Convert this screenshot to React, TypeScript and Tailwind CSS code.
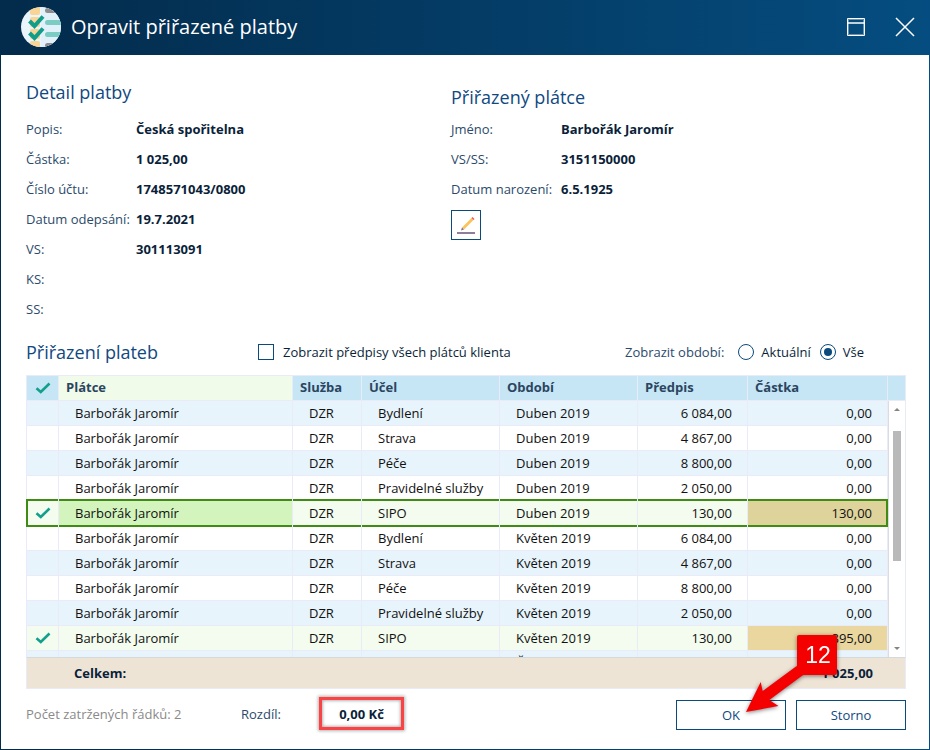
import React, { useState } from 'react';

const paymentDetail = [
  { label: 'Popis:', value: 'Česká spořitelna' },
  { label: 'Částka:', value: '1 025,00' },
  { label: 'Číslo účtu:', value: '1748571043/0800' },
  { label: 'Datum odepsání:', value: '19.7.2021' },
  { label: 'VS:', value: '301113091' },
  { label: 'KS:', value: '' },
  { label: 'SS:', value: '' },
];

const payerDetail = [
  { label: 'Jméno:', value: 'Barbořák Jaromír' },
  { label: 'VS/SS:', value: '3151150000' },
  { label: 'Datum narození:', value: '6.5.1925' },
];

const rows = [
  { purpose: 'Bydlení', period: 'Duben 2019', charge: '6 084,00', amount: '0,00' },
  { purpose: 'Strava', period: 'Duben 2019', charge: '4 867,00', amount: '0,00' },
  { purpose: 'Péče', period: 'Duben 2019', charge: '8 800,00', amount: '0,00' },
  { purpose: 'Pravidelné služby', period: 'Duben 2019', charge: '2 050,00', amount: '0,00' },
  { purpose: 'SIPO', period: 'Duben 2019', charge: '130,00', amount: '130,00', checked: true, selected: true },
  { purpose: 'Bydlení', period: 'Květen 2019', charge: '6 084,00', amount: '0,00' },
  { purpose: 'Strava', period: 'Květen 2019', charge: '4 867,00', amount: '0,00' },
  { purpose: 'Péče', period: 'Květen 2019', charge: '8 800,00', amount: '0,00' },
  { purpose: 'Pravidelné služby', period: 'Květen 2019', charge: '2 050,00', amount: '0,00' },
  { purpose: 'SIPO', period: 'Květen 2019', charge: '130,00', amount: '895,00', checked: true },
  { purpose: 'Bydlení', period: 'Červen 2019', charge: '6 084,00', amount: '0,00' },
];

const headers = ['Služba', 'Účel', 'Období', 'Předpis', 'Částka'];

function CheckMark() {
  return (
    <svg width="16" height="12" viewBox="0 0 16 12" fill="none" className="mx-auto">
      <path d="M1.5 6.2 L5.8 10 L14.5 1.5" stroke="#12a08c" strokeWidth="2.6" />
    </svg>
  );
}

function Logo() {
  return (
    <svg width="40" height="40" viewBox="0 0 40 40">
      <defs>
        <clipPath id="logo-circle">
          <circle cx="20" cy="20" r="20" />
        </clipPath>
      </defs>
      <g clipPath="url(#logo-circle)">
        <rect width="40" height="40" fill="#e9f4fc" />
        <rect x="20" width="20" height="40" fill="#e2f0f9" />
        <g fill="#f8d595">
          <rect x="9" y="-4" width="10" height="12" rx="2" />
          <rect x="9" y="10" width="10" height="10" rx="2" />
          <rect x="9" y="22" width="10" height="10" rx="2" />
          <rect x="9" y="34" width="10" height="10" rx="2" />
        </g>
        <g fill="#7bcdc4">
          <rect x="24" y="13" width="20" height="5" rx="2.5" />
          <rect x="24" y="25" width="20" height="5" rx="2.5" />
        </g>
        <g fill="#8c8c8f">
          <rect x="24" y="1" width="20" height="5" rx="2.5" />
          <rect x="24" y="36" width="20" height="5" rx="2.5" />
        </g>
        <g fill="none" stroke="#109e8b" strokeWidth="4">
          <path d="M8.5 14 L13.5 19 L22 9.5" />
          <path d="M8.5 26 L13.5 31 L22 21.5" />
        </g>
      </g>
    </svg>
  );
}

function DetailList({ items }: { items: { label: string; value: string }[] }) {
  return (
    <dl>
      {items.map((item) => (
        <div key={item.label} className="flex h-[30px] items-center">
          <dt className="w-[110px] shrink-0 whitespace-nowrap text-[#2b4a6b]">{item.label}</dt>
          <dd className="font-bold text-[#0b1f3a]">{item.value}</dd>
        </div>
      ))}
    </dl>
  );
}

function cellFrame(selected?: boolean) {
  return selected
    ? "relative after:pointer-events-none after:absolute after:inset-x-0 after:-top-0.5 after:-bottom-0.5 after:z-10 after:border-y-2 after:border-[#3f8c14] after:content-['']"
    : '';
}

function PaymentsTable() {
  const [checked, setChecked] = useState(rows.map((row) => Boolean(row.checked)));

  const toggle = (index: number) => setChecked(checked.map((c, i) => (i === index ? !c : c)));

  return (
    <div className="flex h-[282px] overflow-hidden">
      <table className="h-fit flex-1 table-fixed border-separate border-spacing-0 whitespace-nowrap text-[#111]">
        <colgroup>
          <col className="w-[33px]" />
          <col />
          <col className="w-[69px]" />
          <col className="w-[138px]" />
          <col className="w-[138px]" />
          <col className="w-[110px]" />
          <col className="w-[140px]" />
        </colgroup>
        <thead>
          <tr className="h-[26px] text-left text-[#2b4560]">
            <th className="border border-[#e9ebf8] bg-[#c6e5f5] p-0">
              <CheckMark />
            </th>
            <th className="border-y border-r border-[#e9ebf8] bg-[#f0fce9] pt-0 pb-0.5 pl-[7px]">Plátce</th>
            {headers.map((header) => (
              <th key={header} className="border-y border-r border-[#e9ebf8] bg-[#c6e5f5] pt-0 pb-0.5 pl-[7px]">
                {header}
              </th>
            ))}
          </tr>
        </thead>
        <tbody>
          {rows.map((row, i) => {
            const background = checked[i] ? 'bg-[#f3fcee]' : i % 2 === 0 ? 'bg-[#e7f4fb]' : 'bg-white';
            const cell = `border-b border-r border-[#e9ebf8] py-0 ${cellFrame(row.selected)}`;
            return (
              <tr key={i} className={`h-[25px] ${background}`}>
                <td className={`border-l px-0 ${cell} ${row.selected ? 'after:-left-px after:border-l-2' : ''}`}>
                  <label className="block h-[24px] pt-1.5">
                    <input
                      type="checkbox"
                      aria-label={`${row.purpose} ${row.period}`}
                      checked={checked[i]}
                      onChange={() => toggle(i)}
                      className="sr-only"
                    />
                    {checked[i] && <CheckMark />}
                  </label>
                </td>
                <td className={`pl-4 ${cell} ${row.selected ? 'bg-[#d3f5bd]' : ''}`}>Barbořák Jaromír</td>
                <td className={`pl-4 ${cell}`}>DZR</td>
                <td className={`pl-4 ${cell}`}>{row.purpose}</td>
                <td className={`pl-4 ${cell}`}>{row.period}</td>
                <td className={`pr-[15px] text-right ${cell}`}>{row.charge}</td>
                <td
                  className={`pr-[15px] text-right ${cell} ${
                    row.selected ? 'bg-[#dfd39c] after:-right-px after:border-r-2' : checked[i] ? 'bg-[#e9d79f]' : ''
                  }`}
                >
                  {row.amount}
                </td>
              </tr>
            );
          })}
        </tbody>
      </table>

      {/* Scrollbar */}
      <div className="flex w-[18px] shrink-0 flex-col">
        <div className="h-[26px] shrink-0 border-y border-r border-[#e9ebf8] bg-[#c6e5f5]" />
        <div className="flex flex-1 flex-col items-center border-l border-r border-l-[#dcdce0] border-r-[#e9ebf8] bg-white py-[7px]">
          <svg width="6" height="3" viewBox="0 0 6 3">
            <path d="M0 3 L3 0 L6 3Z" fill="#858585" />
          </svg>
          <div className="mt-5 h-[130px] w-2 bg-[#b9b9b9]" />
          <svg width="6" height="3" viewBox="0 0 6 3" className="mt-auto">
            <path d="M0 0 L3 3 L6 0Z" fill="#858585" />
          </svg>
        </div>
      </div>
    </div>
  );
}

export default function App() {
  const [period, setPeriod] = useState('all');
  const [showAll, setShowAll] = useState(false);

  return (
    <div className="flex min-h-screen flex-col bg-gradient-to-r from-[#032b4b] to-[#054d80] px-px pb-px font-['Open_Sans','Noto_Sans',sans-serif] text-[13px] leading-[18px]">
      <header className="flex h-[55px] items-center pr-3.5 pb-px pl-5 text-white">
        <Logo />
        <h1 className="ml-2.5 text-[20px] leading-7">Opravit přiřazené platby</h1>
        <div className="ml-auto flex items-center gap-[29px]">
          <button type="button" aria-label="Maximalizovat">
            <svg width="20" height="20" viewBox="0 0 20 20" fill="none" stroke="#fff">
              <path d="M1.5 1.5H18.5V18.5H1.5Z" />
              <path d="M2.5 2.5H17.5V17.5H2.5Z" strokeOpacity="0.4" />
              <path d="M2 6H18" strokeWidth="2" strokeOpacity="0.75" />
            </svg>
          </button>
          <button type="button" aria-label="Zavřít">
            <svg width="20" height="20" viewBox="0 0 20 20" fill="none" stroke="#fff" strokeWidth="1.5">
              <path d="M1 1L19 19M19 1L1 19" />
            </svg>
          </button>
        </div>
      </header>

      <main className="flex-1 bg-white pr-[23px] pb-[19px] pl-[25px]">
        <div className="flex">
          <section className="w-[425px] pt-[23px]">
            <h2 className="mb-2 text-lg leading-7 text-[#10497f]">Detail platby</h2>
            <DetailList items={paymentDetail} />
          </section>
          <section className="flex-1 pt-7">
            <h2 className="mb-[3px] text-lg leading-7 text-[#10497f]">Přiřazený plátce</h2>
            <DetailList items={payerDetail} />
            <button
              type="button"
              aria-label="Upravit plátce"
              className="mt-1.5 flex h-[30px] w-[30px] items-center justify-center border border-[#0a4a7d]"
            >
              <svg width="20" height="20" viewBox="0 0 20 20">
                <rect x="1" y="17" width="18" height="2" fill="#8d7f9b" />
                <path d="M6 12.5L15.5 3L17.5 5L8 14.5Z" fill="#fcc35c" />
                <path d="M6 12.5L8 14.5L5 15.5Z" fill="#7d6f85" />
                <path d="M15.5 3L16.5 2L18.5 4L17.5 5Z" fill="#e8555f" />
              </svg>
            </button>
          </section>
        </div>

        <div className="mt-[5px] flex h-[46px] items-center">
          <h2 className="w-[232px] text-lg leading-7 text-[#10497f]">Přiřazení plateb</h2>
          <label className="flex items-center gap-[9px] text-[#0b1f3a]">
            <input
              type="checkbox"
              checked={showAll}
              onChange={(e) => setShowAll(e.target.checked)}
              className="size-4 appearance-none border border-[#0a4a7d] bg-white checked:bg-[#0a4a7d]"
            />
            Zobrazit předpisy všech plátců klienta
          </label>
          <div role="radiogroup" aria-label="Zobrazit období" className="mr-[42px] ml-auto flex items-center">
            <span className="mr-3.5 text-[#2b4a6b]">Zobrazit období:</span>
            <label className="mr-[9px] flex items-center gap-[7px] text-[#0b1f3a]">
              <input
                type="radio"
                name="period"
                checked={period === 'current'}
                onChange={() => setPeriod('current')}
                className="size-4 appearance-none rounded-full border border-[#0a4a7d] bg-white bg-clip-content p-[3px] checked:bg-[#0a4a7d]"
              />
              Aktuální
            </label>
            <label className="flex items-center gap-[7px] text-[#0b1f3a]">
              <input
                type="radio"
                name="period"
                checked={period === 'all'}
                onChange={() => setPeriod('all')}
                className="size-4 appearance-none rounded-full border border-[#0a4a7d] bg-white bg-clip-content p-[3px] checked:bg-[#0a4a7d]"
              />
              Vše
            </label>
          </div>
        </div>

        <PaymentsTable />

        <div className="flex h-8 items-center justify-between border border-t-[#d6d9da] border-[#e9ebf8] bg-[#eee4d6] pr-8 pl-[47px] font-bold text-[#0b1f3a]">
          <span>Celkem:</span>
          <span>1 025,00</span>
        </div>

        <footer className="mt-2 flex h-[33px] items-center text-[#2b4a6b]">
          <span className="w-[215px] text-[#8a8a8a]">Počet zatržených řádků: 2</span>
          <span className="w-[78px]">Rozdíl:</span>
          <output className="flex h-[33px] w-[85px] items-center justify-center border-3 border-[#fb4345] font-bold text-[#0b1f3a] shadow-[0_0_3px_1px_rgba(0,0,0,0.3),inset_0_0_3px_1px_rgba(0,0,0,0.3)]">
            0,00 Kč
          </output>
          <div className="relative ml-auto flex gap-2.5 self-end text-[#10497f]">
            <button type="button" className="h-[30px] w-[110px] border border-[#0a4a7d]">
              OK
            </button>
            <button type="button" className="h-[30px] w-[110px] border border-[#0a4a7d]">
              Storno
            </button>

            {/* Step callout */}
            <svg
              width="110"
              height="90"
              viewBox="0 0 110 90"
              className="pointer-events-none absolute -top-[70px] right-14 z-20 drop-shadow-[0_1px_2px_rgba(0,0,0,0.5)]"
            >
              <path d="M6 82L20.7 52L22.7 61L56 36.5L70 30L75 38L61.7 46L29.3 70L38.5 76Z" fill="#f40000" />
              <rect x="57" y="5" width="40" height="40" rx="2" fill="#f40000" />
              <text x="78" y="33" textAnchor="middle" fill="#fff" className="font-['Liberation_Sans',sans-serif] text-[23px]">
                12
              </text>
            </svg>
          </div>
        </footer>
      </main>
    </div>
  );
}
